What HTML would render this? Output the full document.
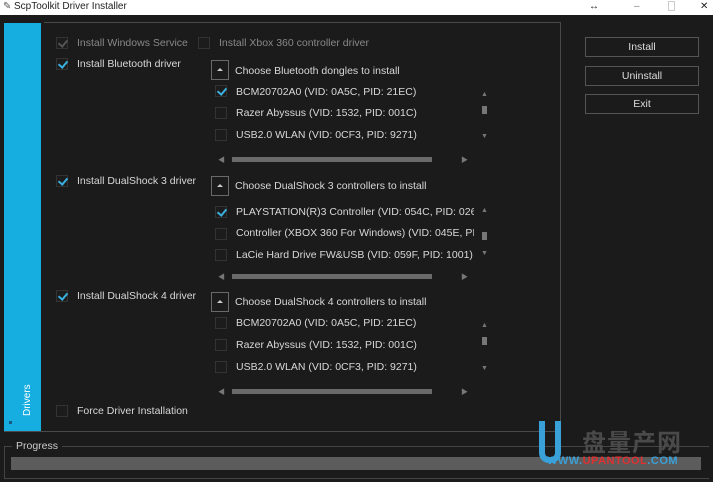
<!DOCTYPE html>
<html><head><meta charset="utf-8"><style>
*{margin:0;padding:0;box-sizing:border-box}
body{width:713px;height:482px;background:#1b1b1b;font-family:"Liberation Sans","Noto Sans CJK SC",sans-serif;font-size:10.5px;color:#d8d8d8;position:relative;overflow:hidden}
.a{position:absolute;white-space:nowrap}
.cb{position:absolute;width:12px;height:12px;border:1px solid #333;background:#1c1c1c}
.cb.on::after{content:"";position:absolute;left:3px;top:0px;width:4px;height:7px;border:solid #3ab0e0;border-width:0 2px 2px 0;transform:rotate(40deg)}
.cb.dis::after{border-color:#555}
.t{position:absolute;white-space:nowrap;line-height:13px;overflow:hidden}
.hb{position:absolute;width:18px;height:20px;border:1px solid #6a6a6a}
.hb::after{content:"";position:absolute;left:5px;top:7px;border-left:3px solid transparent;border-right:3px solid transparent;border-bottom:3px solid #ccc}
.btn{position:absolute;left:585px;width:114px;height:20px;border:1px solid #555;text-align:center;line-height:18px;color:#ddd}
.sm{position:absolute;color:#777;font-size:7px}
.thumb{position:absolute;height:5px;background:#6a6a6a}
</style></head><body>
<div class="a" style="left:0;top:0;width:713px;height:15px;background:#fff;color:#222;font-size:10px;line-height:13px"><span style="position:absolute;left:3px;color:#555">✎</span><span style="position:absolute;left:14px">ScpToolkit Driver Installer</span><span style="position:absolute;left:589px">↔</span><span style="position:absolute;left:634px;color:#888">–</span><span style="position:absolute;left:668px;top:1px;width:7px;height:10px;border:1px solid #ccc"></span><span style="position:absolute;left:700px">✕</span></div>

<div class="a" style="left:4px;top:23px;width:37px;height:408px;background:#16aee0"></div>
<div class="a" style="left:22px;top:416px;transform:rotate(-90deg);transform-origin:left top;color:#fff;font-size:10px">Drivers</div>
<div class="a" style="left:9px;top:421px;width:3px;height:3px;background:#1a5a80"></div>
<div class="a" style="left:44px;top:22px;width:517px;height:410px;border:1px solid #4a4a4a;border-left:none"></div>
<div class="a" style="left:4px;top:431px;width:557px;height:1px;background:#4a4a4a"></div>

<div class="cb on dis" style="left:56px;top:37px"></div><div class="t" style="left:77px;top:37px;color:#888">Install Windows Service</div>
<div class="cb" style="left:198px;top:37px"></div><div class="t" style="left:219px;top:37px;color:#888">Install Xbox 360 controller driver</div>

<div class="cb on" style="left:56px;top:58px"></div><div class="t" style="left:77px;top:58px">Install Bluetooth driver</div>
<div class="hb" style="left:211px;top:60px"></div><div class="t" style="left:235px;top:65px">Choose Bluetooth dongles to install</div>
<div class="cb on" style="left:215px;top:85px"></div><div class="t" style="left:236px;top:86px">BCM20702A0 (VID: 0A5C, PID: 21EC)</div>
<div class="cb" style="left:215px;top:107px"></div><div class="t" style="left:236px;top:107px">Razer Abyssus (VID: 1532, PID: 001C)</div>
<div class="cb" style="left:215px;top:129px"></div><div class="t" style="left:236px;top:129px">USB2.0 WLAN (VID: 0CF3, PID: 9271)</div>
<div class="sm" style="left:481px;top:91px">▲</div><div class="a" style="left:482px;top:106px;width:5px;height:8px;background:#777"></div><div class="sm" style="left:481px;top:133px">▼</div>
<div class="sm" style="left:218px;top:155px">◀</div><div class="thumb" style="left:232px;top:157px;width:200px"></div><div class="sm" style="left:461px;top:155px">▶</div>

<div class="cb on" style="left:56px;top:175px"></div><div class="t" style="left:77px;top:175px">Install DualShock 3 driver</div>
<div class="hb" style="left:211px;top:176px"></div><div class="t" style="left:235px;top:180px">Choose DualShock 3 controllers to install</div>
<div class="cb on" style="left:215px;top:206px"></div><div class="t" style="left:236px;top:206px;width:238px">PLAYSTATION(R)3 Controller (VID: 054C, PID: 0268)</div>
<div class="cb" style="left:215px;top:228px"></div><div class="t" style="left:236px;top:227px;width:238px">Controller (XBOX 360 For Windows) (VID: 045E, PID:</div>
<div class="cb" style="left:215px;top:249px"></div><div class="t" style="left:236px;top:249px;width:238px">LaCie Hard Drive FW&amp;USB (VID: 059F, PID: 1001)</div>
<div class="sm" style="left:481px;top:207px">▲</div><div class="a" style="left:482px;top:232px;width:5px;height:8px;background:#777"></div><div class="sm" style="left:481px;top:250px">▼</div>
<div class="sm" style="left:218px;top:272px">◀</div><div class="thumb" style="left:232px;top:274px;width:200px"></div><div class="sm" style="left:461px;top:272px">▶</div>

<div class="cb on" style="left:56px;top:290px"></div><div class="t" style="left:77px;top:290px">Install DualShock 4 driver</div>
<div class="hb" style="left:211px;top:292px"></div><div class="t" style="left:235px;top:296px">Choose DualShock 4 controllers to install</div>
<div class="cb" style="left:215px;top:317px"></div><div class="t" style="left:236px;top:317px">BCM20702A0 (VID: 0A5C, PID: 21EC)</div>
<div class="cb" style="left:215px;top:339px"></div><div class="t" style="left:236px;top:339px">Razer Abyssus (VID: 1532, PID: 001C)</div>
<div class="cb" style="left:215px;top:361px"></div><div class="t" style="left:236px;top:361px">USB2.0 WLAN (VID: 0CF3, PID: 9271)</div>
<div class="sm" style="left:481px;top:322px">▲</div><div class="a" style="left:482px;top:337px;width:5px;height:8px;background:#777"></div><div class="sm" style="left:481px;top:365px">▼</div>
<div class="sm" style="left:218px;top:387px">◀</div><div class="thumb" style="left:232px;top:389px;width:200px"></div><div class="sm" style="left:461px;top:387px">▶</div>

<div class="cb" style="left:56px;top:405px"></div><div class="t" style="left:77px;top:405px">Force Driver Installation</div>

<div class="btn" style="top:37px">Install</div>
<div class="btn" style="top:66px">Uninstall</div>
<div class="btn" style="top:94px">Exit</div>

<div class="a" style="left:4px;top:446px;width:705px;height:33px;border:1px solid #444;border-right:none"></div>
<div class="a" style="left:12px;top:440px;background:#1b1b1b;padding:0 4px;color:#ccc">Progress</div>
<div class="a" style="left:11px;top:457px;width:690px;height:13px;background:#5c5c5c"></div>

<div class="a" style="left:539px;top:421px;width:22px;height:42px;border:6px solid #3aa0d8;border-top:none;border-radius:0 0 10px 10px"></div>
<div class="a" style="left:582px;top:423px;font-size:24px;color:#4a4a4a;letter-spacing:1px;font-weight:bold">盘量产网</div>
<div class="a" style="left:547px;top:455px;font-size:11px;font-weight:bold;letter-spacing:0.5px"><span style="color:#3aa0d8">WWW.</span><span style="color:#e03030">UPANTOOL</span><span style="color:#3aa0d8">.COM</span></div>
</body></html>
